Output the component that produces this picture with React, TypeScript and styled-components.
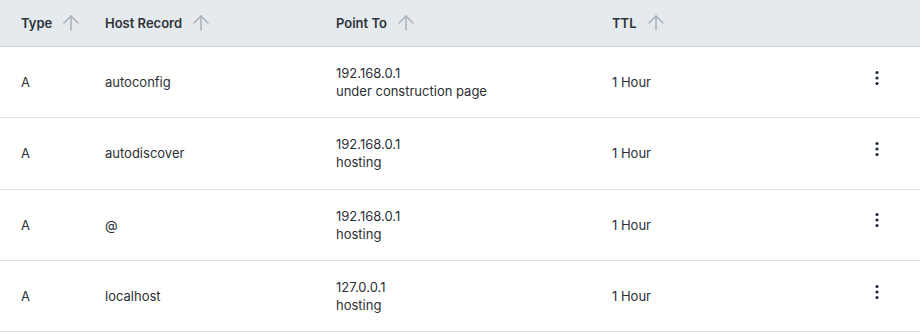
import type { ReactElement } from "react";
import styled, { createGlobalStyle } from "styled-components";
import { ArrowUp } from "lucide-react";

const GlobalStyle = createGlobalStyle`
  body {
    margin: 0;
    background: #ffffff;
    font-family: Inter, "Noto Sans", sans-serif;
  }
`;

const columns = "84px 231px 276px 1fr 86px";

const Table = styled.div`
  width: 920px;
  font-size: 13px;
  color: #2b2f33;
`;

const HeaderRow = styled.div`
  display: grid;
  grid-template-columns: ${columns};
  align-items: center;
  height: 46px;
  padding-left: 21px;
  background: #e4eaee;
  border-bottom: 1px solid #cfd5d9;
`;

const HeaderCell = styled.div`
  display: flex;
  align-items: center;
  gap: 7px;
  font-weight: 600;
  color: #2f3338;
`;

const SortIcon = styled(ArrowUp)`
  color: #adb5bb;
  flex-shrink: 0;
`;

const Row = styled.div`
  display: grid;
  grid-template-columns: ${columns};
  align-items: center;
  height: 70.34px;
  padding-left: 21px;
  border-bottom: 1px solid #dfe2e4;
`;

const Cell = styled.div`
  line-height: 18px;
`;

const ActionCell = styled.div`
  display: flex;
  justify-content: flex-end;
  padding-right: 31px;
`;

const MenuButton = styled.button`
  display: flex;
  align-items: center;
  justify-content: center;
  width: 24px;
  height: 24px;
  margin-top: -9px;
  padding: 0;
  border: none;
  background: transparent;
  color: #1d2a3a;
  cursor: pointer;
`;

type DnsRecord = {
  type: string;
  host: string;
  ip: string;
  target: string;
  ttl: string;
};

const records: DnsRecord[] = [
  { type: "A", host: "autoconfig", ip: "192.168.0.1", target: "under construction page", ttl: "1 Hour" },
  { type: "A", host: "autodiscover", ip: "192.168.0.1", target: "hosting", ttl: "1 Hour" },
  { type: "A", host: "@", ip: "192.168.0.1", target: "hosting", ttl: "1 Hour" },
  { type: "A", host: "localhost", ip: "127.0.0.1", target: "hosting", ttl: "1 Hour" },
];

const headers = ["Type", "Host Record", "Point To", "TTL"];

function KebabIcon() {
  return (
    <svg width="4" height="16" viewBox="0 0 4 16" fill="currentColor">
      <circle cx="2" cy="2.5" r="1.6" />
      <circle cx="2" cy="8" r="1.6" />
      <circle cx="2" cy="13.5" r="1.6" />
    </svg>
  );
}

export default function App(): ReactElement {
  return (
    <>
      <GlobalStyle />
      <Table>
        <HeaderRow>
          {headers.map(h => (
            <HeaderCell key={h}>
              {h}
              <SortIcon size={24} strokeWidth={1.6} />
            </HeaderCell>
          ))}
          <div />
        </HeaderRow>
        {records.map(r => (
          <Row key={r.host}>
            <Cell>{r.type}</Cell>
            <Cell>{r.host}</Cell>
            <Cell>
              {r.ip}
              <br />
              {r.target}
            </Cell>
            <Cell>{r.ttl}</Cell>
            <ActionCell>
              <MenuButton aria-label="More actions">
                <KebabIcon />
              </MenuButton>
            </ActionCell>
          </Row>
        ))}
      </Table>
    </>
  );
}
